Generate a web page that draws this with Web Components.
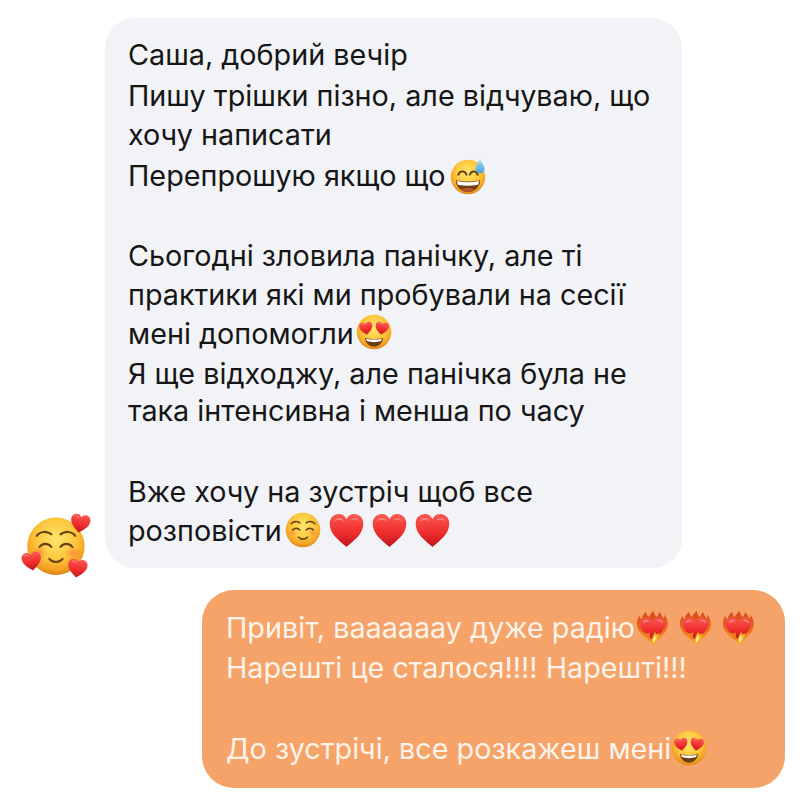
<!DOCTYPE html>
<html lang="uk">
<head>
<meta charset="utf-8">
<style>
  html, body { margin: 0; background: #fff; }
  body { font-family: Inter, "Liberation Sans", sans-serif; }
</style>
</head>
<body>
<chat-thread>
  <chat-row side="in">
    <chat-emoji slot="avatar" name="hearts" size="70"></chat-emoji>
    <chat-bubble tone="grey">
      <chat-line h="41.2">Саша, добрий вечір</chat-line>
      <chat-line h="39.2">Пишу трішки пізно, але відчуваю, що</chat-line>
      <chat-line h="40.7">хочу написати</chat-line>
      <chat-line h="40.2">Перепрошую якщо що<chat-emoji name="sweat" lead="4" drop="8.5"></chat-emoji></chat-line>
      <chat-line h="40.2"></chat-line>
      <chat-line h="38.2">Сьогодні зловила панічку, але ті</chat-line>
      <chat-line h="39.2">практики які ми пробували на сесії</chat-line>
      <chat-line h="39.7">мені допомогли<chat-emoji name="eyes" lead="2"></chat-emoji></chat-line>
      <chat-line h="37.7">Я ще відходжу, але панічка була не</chat-line>
      <chat-line h="40.4">така інтенсивна і менша по часу</chat-line>
      <chat-line h="40.4"></chat-line>
      <chat-line h="39.2">Вже хочу на зустріч щоб все</chat-line>
      <chat-line>розповісти<chat-emoji name="relaxed" lead="3"></chat-emoji> <chat-emoji name="heart" size="35"></chat-emoji> <chat-emoji name="heart" size="35"></chat-emoji> <chat-emoji name="heart" size="35"></chat-emoji></chat-line>
    </chat-bubble>
  </chat-row>
  <chat-row side="out">
    <chat-bubble tone="orange">
      <chat-line>Привіт, ваааааау дуже радію<chat-emoji name="fire" size="35"></chat-emoji> <chat-emoji name="fire" size="35"></chat-emoji> <chat-emoji name="fire" size="35"></chat-emoji></chat-line>
      <chat-line>Нарешті це сталося!!!! Нарешті!!!</chat-line>
      <chat-line></chat-line>
      <chat-line>До зустрічі, все розкажеш мені<chat-emoji name="eyes"></chat-emoji></chat-line>
    </chat-bubble>
  </chat-row>
</chat-thread>

<script>
const HEART = 'M50 88C30 72 8 56 8 32C8 18 19 9 31 9C39 9 46 13 50 21C54 13 61 9 69 9C81 9 92 18 92 32C92 56 70 72 50 88Z';

const faceDefs = `
  <defs>
    <radialGradient id="face" cx="50%" cy="38%" r="62%">
      <stop offset="0" stop-color="#ffe56b"/>
      <stop offset=".55" stop-color="#fdc93f"/>
      <stop offset=".86" stop-color="#f4a020"/>
      <stop offset="1" stop-color="#d9851a"/>
    </radialGradient>
    <linearGradient id="red" x1="0" y1="0" x2="0" y2="1">
      <stop offset="0" stop-color="#fb5a52"/>
      <stop offset=".6" stop-color="#ee2a2a"/>
      <stop offset="1" stop-color="#b81a1e"/>
    </linearGradient>
    <radialGradient id="blush" cx="50%" cy="50%" r="50%">
      <stop offset="0" stop-color="#f5723c" stop-opacity=".55"/>
      <stop offset="1" stop-color="#f5723c" stop-opacity="0"/>
    </radialGradient>
    <linearGradient id="drop" x1="0" y1="0" x2="0" y2="1">
      <stop offset="0" stop-color="#a9dcf2"/>
      <stop offset="1" stop-color="#4c9fdc"/>
    </linearGradient>
    <linearGradient id="flame" x1="0" y1="0" x2="0" y2="1">
      <stop offset="0" stop-color="#d9431c"/>
      <stop offset=".6" stop-color="#f0701f"/>
      <stop offset="1" stop-color="#f9b52c"/>
    </linearGradient>
  </defs>`;

const heartAt = (x, y, s, r = 0) =>
  `<g transform="translate(${x} ${y}) rotate(${r}) scale(${s}) translate(-50 -50)">
     <path d="${HEART}" fill="url(#red)"/>
     <path d="M22 20C30 14 40 18 44 28C36 22 28 22 22 20Z" fill="#fff" opacity=".35"/>
   </g>`;

const art = {
  sweat: `
    <circle cx="50" cy="50" r="48" fill="url(#face)"/>
    <path d="M23 44C27 31 42 31 46 44" fill="none" stroke="#5b3a12" stroke-width="5" stroke-linecap="round"/>
    <path d="M55 44C59 31 73 31 77 44" fill="none" stroke="#5b3a12" stroke-width="5" stroke-linecap="round"/>
    <path d="M16 59C37 64 63 64 84 59C82 80 67 92 50 92C33 92 18 80 16 59Z" fill="#6d3d12"/>
    <path d="M19 61C39 66 61 66 81 61C80 66 79 69 77 72C60 75 40 75 23 72C21 69 20 66 19 61Z" fill="#fff"/>
    <path d="M31 84C42 79 58 79 69 84C63 89 57 92 50 92C43 92 37 89 31 84Z" fill="#b5562a"/>
    <path d="M83 1C88 11 96 18 96 27C96 35 90 40 83 40C76 40 71 34 71 27C71 18 79 11 83 1Z" fill="url(#drop)"/>`,
  eyes: `
    <circle cx="50" cy="50" r="48" fill="url(#face)"/>
    ${heartAt(28, 41, .44, -8)}
    ${heartAt(72, 41, .44, 8)}
    <path d="M25 67C40 71 60 71 75 67C74 81 63 91 50 91C37 91 26 81 25 67Z" fill="#6d3d12"/>
    <path d="M28 68.5C42 72 58 72 72 68.5C71 72 70 74 69 76C56 79 44 79 31 76C30 74 29 72 28 68.5Z" fill="#fff"/>`,
  relaxed: `
    <circle cx="50" cy="50" r="48" fill="url(#face)"/>
    <ellipse cx="21" cy="58" rx="15" ry="11" fill="url(#blush)"/>
    <ellipse cx="79" cy="58" rx="15" ry="11" fill="url(#blush)"/>
    <path d="M17 33C23 25 34 25 41 30" fill="none" stroke="#6b4214" stroke-width="4.5" stroke-linecap="round"/>
    <path d="M59 30C66 25 77 25 83 33" fill="none" stroke="#6b4214" stroke-width="4.5" stroke-linecap="round"/>
    <path d="M21 50C26 44 36 44 41 50" fill="none" stroke="#6b4214" stroke-width="4.5" stroke-linecap="round"/>
    <path d="M59 50C64 44 74 44 79 50" fill="none" stroke="#6b4214" stroke-width="4.5" stroke-linecap="round"/>
    <path d="M38 70C44 77 56 77 62 70" fill="none" stroke="#6b4214" stroke-width="4.5" stroke-linecap="round"/>`,
  hearts: `
    <circle cx="48.5" cy="49" r="41" fill="url(#face)"/>
    <ellipse cx="24" cy="58" rx="13" ry="10" fill="url(#blush)"/>
    <ellipse cx="73" cy="58" rx="13" ry="10" fill="url(#blush)"/>
    <path d="M21 34C26 27 36 27 42 32" fill="none" stroke="#6b4214" stroke-width="3" stroke-linecap="round"/>
    <path d="M55 32C61 27 71 27 76 34" fill="none" stroke="#6b4214" stroke-width="3" stroke-linecap="round"/>
    <path d="M25 50C29 44 38 44 42 50" fill="none" stroke="#6b4214" stroke-width="3" stroke-linecap="round"/>
    <path d="M55 50C59 44 68 44 72 50" fill="none" stroke="#6b4214" stroke-width="3" stroke-linecap="round"/>
    <path d="M39 67C44 73 53 73 58 67" fill="none" stroke="#6b4214" stroke-width="3" stroke-linecap="round"/>
    ${heartAt(83, 17, .33, 10)}
    ${heartAt(14, 71, .33, -8)}
    ${heartAt(79, 81, .33, 8)}`,
  heart: `<path d="M50 97C28 78 2 60 2 30C2 13 15 3 28 3C38 3 46 8 50 18C54 8 62 3 72 3C85 3 98 13 98 30C98 60 72 78 50 97Z" fill="url(#red)"/>
    <path d="M14 24C20 11 36 11 44 24C34 18 24 18 14 24Z" fill="#fff" opacity=".3"/>
    <path d="M60 22C66 11 81 11 88 24C79 18 68 18 60 22Z" fill="#fff" opacity=".25"/>`,
  fire: `
    <g transform="translate(4 0) scale(.92 1)">
    <path d="M6 56C-2 40 2 26 10 16C10 23 13 26 17 25C18 15 25 10 31 5C30 12 34 16 38 20C42 14 48 8 54 3C54 11 58 16 63 20C67 16 70 11 71 5C78 13 80 20 84 24C87 21 88 18 87 13C97 26 101 42 94 56C86 72 66 86 53 99C42 88 14 72 6 56Z" fill="url(#flame)"/>
    <path d="M50 84C33 72 11 60 11 41C11 29 21 22 31 22C39 22 46 26 50 33C54 26 61 22 69 22C79 22 89 29 89 41C89 60 67 72 50 84Z" fill="url(#red)"/>
    <path d="M19 38C23 29 34 27 40 33C33 31 26 33 19 38Z" fill="#fff" opacity=".5"/>
    <path d="M64 30C71 27 80 30 83 38C77 33 71 31 64 30Z" fill="#fff" opacity=".5"/>
    <path d="M22 62C24 72 36 82 46 90C42 82 41 72 43 62C38 68 28 68 22 62Z" fill="#f27a1e"/>
    <path d="M52 98C45 88 49 74 59 62C59 70 63 72 69 65C71 76 62 90 52 98Z" fill="#f9b52c"/>
    <path d="M53 92C50 85 53 78 58 73C60 80 61 84 58 87Z" fill="#fff2a0"/>
    </g>`
};

class ChatThread extends HTMLElement {
  constructor() {
    super();
    this.attachShadow({ mode: 'open' }).innerHTML = `
      <style>
        :host { display: flex; flex-direction: column; gap: 22px; box-sizing: border-box;
                width: 800px; height: 803px; padding: 18px 15px 15px 22px; overflow: hidden; }
      </style>
      <slot></slot>`;
  }
}

class ChatRow extends HTMLElement {
  constructor() {
    super();
    this.attachShadow({ mode: 'open' }).innerHTML = `
      <style>
        :host { display: flex; align-items: flex-end; gap: 13px; }
        :host([side="out"]) { justify-content: flex-end; }
        ::slotted([slot="avatar"]) { margin-bottom: -14px; }
      </style>
      <slot name="avatar"></slot>
      <slot></slot>`;
  }
}

class ChatBubble extends HTMLElement {
  constructor() {
    super();
    this.attachShadow({ mode: 'open' }).innerHTML = `
      <style>
        :host { display: block; box-sizing: border-box; }
        :host([tone="grey"]) { --line: 39.67px; width: 577px; height: 550px; border-radius: 30px; padding: 17px 23px; background: #f2f3f7; color: #161616; }
        :host([tone="orange"]) { --line: 40.4px; width: 583px; height: 198px; border-radius: 32px; padding: 18px 24px; background: #f5a368; color: #fdf3ea; }
      </style>
      <slot></slot>`;
  }
}

class ChatLine extends HTMLElement {
  constructor() {
    super();
    const h = this.getAttribute('h');
    this.attachShadow({ mode: 'open' }).innerHTML = `
      <style>
        :host { display: block; height: ${h ? h + 'px' : 'var(--line)'}; line-height: var(--line); font-size: 28.75px; white-space: nowrap; }
      </style>
      <slot></slot>`;
  }
}

class ChatEmoji extends HTMLElement {
  constructor() {
    super();
    const name = this.getAttribute('name');
    const size = this.getAttribute('size') || 36;
    const lead = this.getAttribute('lead') || 0;
    const drop = this.getAttribute('drop') || 6.5;
    this.attachShadow({ mode: 'open' }).innerHTML = `
      <style>
        :host { display: inline-block; width: ${size}px; height: ${size}px; margin-left: ${lead}px; vertical-align: -${drop}px; line-height: 0; }
        :host([slot]) { display: block; flex: none; }
        svg { width: 100%; height: 100%; display: block; overflow: visible; }
      </style>
      <svg viewBox="0 0 100 100">${faceDefs}${art[name] || ''}</svg>`;
  }
}

customElements.define('chat-thread', ChatThread);
customElements.define('chat-row', ChatRow);
customElements.define('chat-bubble', ChatBubble);
customElements.define('chat-line', ChatLine);
customElements.define('chat-emoji', ChatEmoji);
</script>
</body>
</html>
